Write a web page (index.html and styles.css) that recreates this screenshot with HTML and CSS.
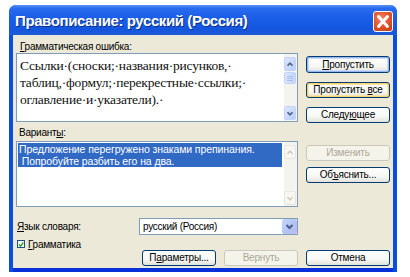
FILE: index.html
```html
<!DOCTYPE html>
<html lang="ru">
<head>
  <meta charset="UTF-8" />
  <title>Правописание: русский (Россия)</title>
  <link rel="stylesheet" href="styles.css">
</head>
<body>
  <div class="window">
    <!-- Title bar -->
    <div class="titlebar">
      <span class="title">Правописание: русский (Россия)</span>
      <div class="close-btn">
        <svg width="20" height="21" viewBox="0 0 20 21">
          <path d="M5.5 5.5 L14.5 15.5 M14.5 5.5 L5.5 15.5" stroke="white" stroke-width="3" stroke-linecap="round"/>
        </svg>
      </div>
    </div>

    <!-- Dialog body -->
    <div class="client">
      <div class="left-col">
        <div class="label"><u>Г</u>рамматическая ошибка:</div>
        <div class="textbox">
          <div class="error-text">Ссылки·(сноски;·названия·рисунков,·<br>таблиц,·формул;·перекрестные·ссылки;·<br>оглавление·и·указатели).·</div>
          <div class="scrollbar">
            <div class="sb-btn">
              <svg width="12" height="13" viewBox="0 0 12 13"><path d="M3 8 L6 5 L9 8" stroke="#4d6185" stroke-width="2" fill="none"/></svg>
            </div>
            <div class="sb-thumb"><span></span><span></span><span></span></div>
            <div class="sb-track"></div>
            <div class="sb-btn">
              <svg width="12" height="13" viewBox="0 0 12 13"><path d="M3 5 L6 8 L9 5" stroke="#4d6185" stroke-width="2" fill="none"/></svg>
            </div>
          </div>
        </div>

        <div class="label label-variants">Вариант<u>ы</u>:</div>
        <div class="listbox">
          <div class="suggestions">
            <div class="selected">Предложение перегружено знаками препинания.<br>&nbsp;Попробуйте разбить его на два.</div>
          </div>
          <div class="scrollbar disabled">
            <div class="sb-btn">
              <svg width="12" height="13" viewBox="0 0 12 13"><path d="M3 8 L6 5 L9 8" stroke="#c9c7ba" stroke-width="1.5" fill="none"/></svg>
            </div>
            <div class="sb-track"></div>
            <div class="sb-btn">
              <svg width="12" height="13" viewBox="0 0 12 13"><path d="M3 5 L6 8 L9 5" stroke="#c9c7ba" stroke-width="1.5" fill="none"/></svg>
            </div>
          </div>
        </div>

        <div class="lang-row">
          <span class="lang-label"><u>Я</u>зык словаря:</span>
          <div class="select">
            <span class="select-value">русский (Россия)</span>
            <div class="select-btn">
              <svg width="13" height="15" viewBox="0 0 13 15"><path d="M3.5 6 L6.5 9 L9.5 6" stroke="#4d6185" stroke-width="2" fill="none"/></svg>
            </div>
          </div>
        </div>
      </div>

      <div class="right-col">
        <button class="btn btn-default"><span><u>П</u>ропустить</span></button>
        <button class="btn btn-focus"><span>Пропустить <u>в</u>се</span></button>
        <button class="btn"><span>Следу<u>ю</u>щее</span></button>
        <button class="btn btn-disabled btn-change"><span>Изменить</span></button>
        <button class="btn btn-explain"><span>Об<u>ъ</u>яснить...</span></button>
      </div>

      <div class="check-row">
        <div class="checkbox">
          <svg width="7" height="7" viewBox="0 0 7 7"><path d="M1 3.5 L3 5.5 L6.2 1.2" stroke="#21a121" stroke-width="1.6" fill="none"/></svg>
        </div>
        <span><u>Г</u>рамматика</span>
      </div>

      <div class="bottom-row">
        <button class="btn btn-wide"><span>П<u>а</u>раметры...</span></button>
        <button class="btn btn-wide btn-disabled"><span>Вернуть</span></button>
        <button class="btn btn-cancel"><span>Отмена</span></button>
      </div>
    </div>
  </div>
</body>
</html>
```

FILE: styles.css
```css
* {
  margin: 0;
  padding: 0;
  box-sizing: border-box;
}
body {
  background-color: #fff;
  font-family: 'Liberation Sans', Arial, sans-serif;
  font-size: 10px;
  letter-spacing: -0.25px;
  color: #000;
}
u {
  text-decoration: underline;
  text-underline-offset: 1px;
}
/* Window frame */
.window {
  margin: 5px 0 0 9px;
  width: 388px;
  height: 267px;
  border-radius: 7px 7px 0 0;
  overflow: hidden;
  display: flex;
  flex-direction: column;
  background-color: #0a4ee0;
}
.titlebar {
  height: 30px;
  display: flex;
  align-items: center;
  justify-content: space-between;
  padding: 0 4px 0 6px;
  background: linear-gradient(#5a95f5 0, #2a6cef 3px, #1b5fe8 40%, #1456de 80%, #1c5ad6 100%);
}
.title {
  color: #fff;
  font-family: 'Liberation Sans', Arial, sans-serif;
  font-weight: bold;
  font-size: 15px;
  letter-spacing: -0.4px;
  text-shadow: 1px 1px 0 #0c2f8a;
  margin-top: 1px;
}
.close-btn {
  width: 20px;
  height: 21px;
  margin-top: 3px;
  border: 1px solid #fff;
  border-radius: 3px;
  background: radial-gradient(circle at 40% 35%, #f0866a 0, #e0552e 50%, #c63712 100%);
  display: flex;
  align-items: center;
  justify-content: center;
}
.close-btn svg {
  margin: -1px;
}
/* Client area */
.client {
  flex: 1;
  margin: 0 4px 4px 4px;
  background-color: #ece9d8;
  display: grid;
  grid-template-columns: 282px 84px;
  column-gap: 8px;
  align-content: start;
  padding: 6px 3px 0 3px;
  box-shadow: 0 4px 0 #0831d9;
}
.left-col {
  display: flex;
  flex-direction: column;
}
.label {
  height: 12px;
  line-height: 12px;
  padding-left: 4px;
}
.label-variants {
  margin-top: 5px;
  padding-left: 3px;
}
.textbox {
  height: 69px;
  border: 1px solid #7f9db9;
  background-color: #fff;
  display: flex;
}
.error-text {
  flex: 1;
  font-family: 'Liberation Serif', 'Times New Roman', serif;
  font-size: 13.5px;
  letter-spacing: -0.2px;
  line-height: 17px;
  padding: 3px 0 0 3px;
  color: #111;
}
.scrollbar {
  width: 13px;
  display: flex;
  flex-direction: column;
  background-color: #f4f3ee;
  padding: 3px 1px 1px 0;
}
.sb-btn {
  height: 14px;
  border: 1px solid #c3d3fd;
  border-radius: 2px;
  background: linear-gradient(135deg, #dde8fe, #b9cdf9);
  display: flex;
  align-items: center;
  justify-content: center;
}
.sb-btn svg {
  display: block;
}
.sb-thumb {
  height: 12px;
  margin-top: 1px;
  border: 1px solid #c3d3fd;
  border-radius: 2px;
  background: linear-gradient(90deg, #dce7fe, #c5d6fb);
  display: flex;
  flex-direction: column;
  align-items: center;
  justify-content: center;
  gap: 1px;
}
.sb-thumb span {
  width: 6px;
  height: 1px;
  background-color: #a5bdef;
}
.sb-track {
  flex: 1;
}
.scrollbar.disabled .sb-btn {
  border-color: #e8e6de;
  background: #f7f6f1;
}
.listbox {
  height: 66px;
  margin-top: 2px;
  border: 1px solid #7f9db9;
  background-color: #fff;
  display: flex;
}
.suggestions {
  flex: 1;
  padding: 1px 2px 0 1px;
}
.selected {
  background-color: #316ac5;
  color: #fff;
  font-size: 10.5px;
  letter-spacing: -0.1px;
  line-height: 12px;
  padding: 0 0 0 1px;
}
.lang-row {
  margin-top: 11px;
  display: flex;
  align-items: center;
  justify-content: space-between;
  padding-left: 1px;
}
.select {
  width: 159px;
  height: 17px;
  border: 1px solid #7f9db9;
  background-color: #fff;
  display: flex;
  align-items: center;
}
.select-value {
  flex: 1;
  padding-left: 3px;
}
.select-btn {
  width: 15px;
  height: 15px;
  border-radius: 2px;
  background: linear-gradient(135deg, #c7d6fb, #b0c3f4 60%, #c5b6f0);
  display: flex;
  align-items: center;
  justify-content: center;
}
/* Buttons */
.right-col {
  display: flex;
  flex-direction: column;
  padding-top: 15px;
}
.btn {
  height: 16px;
  font-family: 'Liberation Sans', Arial, sans-serif;
  font-size: 10px;
  letter-spacing: -0.2px;
  color: #000;
  border: 1px solid #003c74;
  border-radius: 3px;
  background: linear-gradient(#fff 0, #f7f7f4 60%, #e3e2da 100%);
  display: flex;
  align-items: center;
  justify-content: center;
  line-height: 12px;
}
.right-col .btn {
  margin-top: 9px;
}
.right-col .btn-default {
  height: 17px;
  margin-top: 0;
  box-shadow: inset 0 0 0 1px #97b5ee, inset 0 0 0 2px #cfdcf7;
}
.btn-focus {
  box-shadow: inset 0 0 0 1px #f7d370, inset 0 0 0 2px #fbe4a6;
}
.right-col .btn-change {
  margin-top: 22px;
}
.right-col .btn-explain {
  margin-top: 6px;
}
.btn-disabled {
  border-color: #cac8bb;
  color: #aca899;
  background: #f5f4ea;
}
.check-row {
  grid-column: 1 / 3;
  margin-top: 4px;
  display: flex;
  align-items: center;
  gap: 3px;
  padding-left: 1px;
  height: 10px;
}
.checkbox {
  width: 8px;
  height: 8px;
  border: 1px solid #1c5180;
  background-color: #fff;
  display: flex;
  align-items: center;
  justify-content: center;
}
.bottom-row {
  grid-column: 1 / 3;
  margin-top: 1px;
  display: flex;
  justify-content: flex-end;
  gap: 8px;
}
.btn-wide {
  width: 74px;
}
.btn-cancel {
  width: 84px;
}
```
